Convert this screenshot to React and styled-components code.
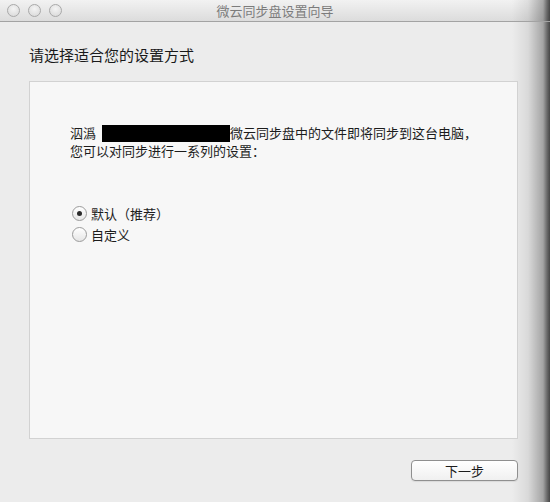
import styled, { createGlobalStyle } from "styled-components";

const edgeShade =
  "linear-gradient(to right, rgba(0,0,0,0) 512px, rgba(0,0,0,0.08) 528px, rgba(0,0,0,0.3) 543px, rgba(0,0,0,0.55) 547px, rgba(0,0,0,0.7) 550px)";

const GlobalStyle = createGlobalStyle`
  *, *::before, *::after {
    box-sizing: border-box;
  }
  html, body {
    margin: 0;
    padding: 0;
    background: #ececec;
  }
  body {
    font-family: "Noto Sans CJK SC", "Liberation Sans", sans-serif;
    color: #1c1c1c;
  }
`;

const Window = styled.div`
  width: 550px;
  height: 502px;
  display: flex;
  flex-direction: column;
  background: ${edgeShade}, #ececec;
  overflow: hidden;
`;

const TitleBar = styled.div`
  height: 22px;
  flex: none;
  display: grid;
  grid-template-columns: 1fr auto 1fr;
  align-items: center;
  border-bottom: 1px solid #a3a3a3;
  background: ${edgeShade}, linear-gradient(#f2f2f2, #dcdcdc);
`;

const Lights = styled.div`
  display: flex;
  gap: 8px;
  padding-left: 7px;
`;

const Light = styled.span`
  width: 13px;
  height: 13px;
  border-radius: 50%;
  border: 1px solid #a9a9a9;
  background: radial-gradient(circle at 50% 35%, #f4f4f4, #d6d6d6);
`;

const Title = styled.div`
  font-size: 13px;
  line-height: 21px;
  color: #7c7c7c;
`;

const Body = styled.div`
  flex: 1;
  display: flex;
  flex-direction: column;
  padding: 23px 32px 0 29px;
`;

const Heading = styled.h1`
  margin: 0;
  font-size: 15px;
  font-weight: normal;
  line-height: 20px;
  color: #1a1a1a;
`;

const Panel = styled.div`
  margin-top: 16px;
  height: 358px;
  border: 1px solid #d2d2d2;
  background: #f7f7f7;
  padding: 42px 40px 0;
`;

const Line = styled.div`
  font-size: 13px;
  line-height: 17px;
  white-space: nowrap;
`;

const Redacted = styled.span`
  display: inline-block;
  width: 128px;
  height: 17px;
  background: #000;
  vertical-align: -4px;
  margin-left: 6px;
`;

const Options = styled.div`
  margin-top: 47px;
  display: flex;
  flex-direction: column;
  gap: 6px;
`;

const Option = styled.label`
  display: flex;
  align-items: center;
  gap: 4px;
  margin-left: 2px;
  font-size: 13px;
  line-height: 15px;
`;

const Radio = styled.span`
  width: 15px;
  height: 15px;
  border-radius: 50%;
  border: 1px solid #9b9b9b;
  background: linear-gradient(#ffffff, #e6e6e6);
  display: flex;
  align-items: center;
  justify-content: center;

  &::after {
    content: "";
    width: 5px;
    height: 5px;
    border-radius: 50%;
    background: ${(p) => (p.$checked ? "#2a2a2a" : "transparent")};
  }
`;

const Footer = styled.div`
  display: flex;
  justify-content: flex-end;
  padding-top: 21px;
`;

const Button = styled.button`
  width: 107px;
  height: 21px;
  border: 1px solid #8f8f8f;
  border-radius: 4px;
  background: linear-gradient(#ffffff, #f0f0f0);
  font-family: inherit;
  font-size: 13px;
  line-height: 17px;
  color: #1c1c1c;
  padding: 0;
  box-shadow: 0 1px 1px rgba(0, 0, 0, 0.08);
`;

export default function App() {
  return (
    <>
      <GlobalStyle />
      <Window>
        <TitleBar>
          <Lights>
            <Light />
            <Light />
            <Light />
          </Lights>
          <Title>微云同步盘设置向导</Title>
          <div />
        </TitleBar>
        <Body>
          <Heading>请选择适合您的设置方式</Heading>
          <Panel>
            <Line>
              泅潙<Redacted />微云同步盘中的文件即将同步到这台电脑，
            </Line>
            <Line>您可以对同步进行一系列的设置：</Line>
            <Options>
              <Option>
                <Radio $checked />
                默认（推荐）
              </Option>
              <Option>
                <Radio />
                自定义
              </Option>
            </Options>
          </Panel>
          <Footer>
            <Button>下一步</Button>
          </Footer>
        </Body>
      </Window>
    </>
  );
}
